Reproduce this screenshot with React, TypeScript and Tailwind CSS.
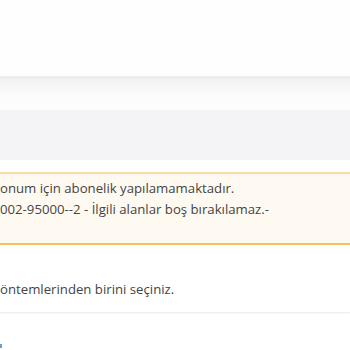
import React from 'react';

const App: React.FC = () => {
  return (
    <div className="w-[350px] h-[350px] overflow-hidden bg-white font-['Open_Sans',sans-serif] text-[#444]">
      {/* top white area */}
      <div className="h-[76px] bg-[#fefefe]" />
      {/* header shadow band */}
      <div className="h-[3px] bg-[#eeeeee]" />
      <div className="h-[31px] bg-gradient-to-b from-[#f3f3f3] via-[#fbfbfb] to-[#fdfdfd]" />
      <div className="h-[50px] bg-[#f4f4f6]" />

      <div className="pt-[12px]">
        <div className="border-t-2 border-b-2 border-t-[#f7dca6] border-b-[#f0c35c] bg-[#fffaf1] pt-[4px] pb-[23px]">
          <p className="text-[13.2px] leading-[21px] whitespace-nowrap">onum için abonelik yapılamamaktadır.</p>
          <p className="text-[13.2px] leading-[21px] whitespace-nowrap">002-95000--2 - İlgili alanlar boş bırakılamaz.-</p>
        </div>
      </div>

      <div className="pt-[34px] pb-[13px] border-b border-[#f0f0f0] shadow-[0_1px_2px_rgba(0,0,0,0.03)]">
        <p className="text-[13.2px] leading-[20px] whitespace-nowrap">öntemlerinden birini seçiniz.</p>
      </div>

      <div className="pt-[31px]">
        <span className="block w-[2px] h-[4px] bg-[#6a9fd0]" />
      </div>
    </div>
  );
};

export default App;
